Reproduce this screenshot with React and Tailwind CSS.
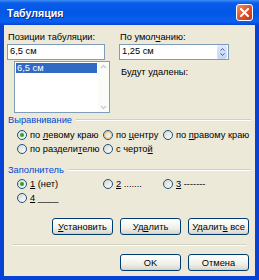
import React from "react";

function U({ children }) {
  return <span className="underline underline-offset-[1px] decoration-[1px]">{children}</span>;
}

function Radio({ checked, hover }) {
  return (
    <span className="w-[10px] h-[10px] rounded-full border border-[#1c5180] bg-[linear-gradient(135deg,#d6d6cf,#ffffff)] flex items-center justify-center shrink-0">
      {hover && <span className="w-[8px] h-[8px] rounded-full border-[1.5px] border-[#f5b24b]" />}
      {checked && <span className="w-[4px] h-[4px] rounded-full bg-[#26a826]" />}
    </span>
  );
}

function RadioItem({ checked, hover, children }) {
  return (
    <div className="flex items-center gap-[3px] h-[14px]">
      <Radio checked={checked} hover={hover} />
      <span className="text-[9.3px] leading-[12px] text-black whitespace-nowrap">{children}</span>
    </div>
  );
}

function Btn({ children, w = "w-[61px]" }) {
  return (
    <div className={`${w} h-[17px] rounded-[3px] border border-[#003c74] bg-[linear-gradient(180deg,#ffffff,#f0f0ea_60%,#d8d5c8)] flex items-center justify-center text-[9.3px] leading-[12px] text-black shadow-[inset_0_-1px_0_#d6d0c5]`}>
      <span className="whitespace-pre">{children}</span>
    </div>
  );
}

function GroupHeader({ children }) {
  return (
    <div className="flex items-center h-[12px] pl-[4px] pr-[4px]">
      <span className="text-[9.3px] leading-[12px] text-[#0046d5] whitespace-nowrap">{children}</span>
      <span className="flex-1 ml-[4px] h-[2px] border-t border-[#d0d0bf] border-b border-b-white" />
    </div>
  );
}

export default function App() {
  return (
    <div className="w-[259px] h-[280px] bg-[#0842d4] flex flex-col font-['Liberation_Sans',Arial,sans-serif] overflow-hidden">
      {/* Title bar */}
      <div className="h-[25px] shrink-0 flex items-center pl-[7px] pr-[6px] bg-[linear-gradient(180deg,#3d8cf6_0%,#0a5de8_12%,#0256e6_50%,#0a60ee_85%,#0646d6_100%)]">
        <span className="text-white font-bold text-[10.6px] leading-[14px] [text-shadow:1px_1px_0_#0a2a8a]">Табуляция</span>
        <div className="ml-auto w-[17px] h-[17px] rounded-[3px] border border-white bg-[linear-gradient(135deg,#f0906c,#e0532f_50%,#c23a16)] flex items-center justify-center">
          <svg width="9" height="9" viewBox="0 0 9 9">
            <path d="M1 1 L8 8 M8 1 L1 8" stroke="white" strokeWidth="2" strokeLinecap="square" />
          </svg>
        </div>
      </div>

      {/* Body */}
      <div className="flex-1 mx-[4px] mb-[4px] bg-[#ece9d8] flex flex-col pt-[6px]">
        {/* top section */}
        <div className="flex pl-[3px]">
          <div className="w-[98px] flex flex-col">
            <div className="text-[9.3px] leading-[12px] pl-[1px] text-black whitespace-nowrap">Позиции табуляции:</div>
            <div className="mt-[1px] h-[16px] bg-white border border-[#7f9db9] flex items-center pl-[2px] text-[9.3px] text-black">6,5 см</div>
            <div className="mt-[1px] ml-[7px] w-[96px] h-[52px] bg-white border border-[#7f9db9] flex">
              <div className="flex-1 p-[1px]">
                <div className="h-[10px] bg-[#316ac5] text-white text-[9.3px] leading-[10px] pl-[1px]">6,5 см</div>
              </div>
              <div className="w-[11px] bg-[#fbfbf8] flex flex-col justify-between items-center py-[2px]">
                <svg width="7" height="5" viewBox="0 0 7 5"><path d="M1 4 L3.5 1.5 L6 4" stroke="#c8cbd8" strokeWidth="1.3" fill="none" /></svg>
                <svg width="7" height="5" viewBox="0 0 7 5"><path d="M1 1 L3.5 3.5 L6 1" stroke="#c8cbd8" strokeWidth="1.3" fill="none" /></svg>
              </div>
            </div>
          </div>
          <div className="w-[110px] ml-[14px] flex flex-col">
            <div className="text-[9.3px] leading-[12px] pl-[1px] text-black whitespace-nowrap">По умол<U>ч</U>анию:</div>
            <div className="mt-[1px] h-[16px] bg-white border border-[#7f9db9] flex items-center pl-[2px] text-[9.3px] text-black">
              <span className="flex-1">1,25 см</span>
              <div className="w-[10px] h-[14px] mr-[1px] bg-[linear-gradient(180deg,#dfe8fb,#c6d5f6)] rounded-[2px] flex flex-col items-center justify-center gap-[2px]">
                <svg width="5" height="3" viewBox="0 0 5 3"><path d="M0.5 2.7 L2.5 0.5 L4.5 2.7" stroke="#4d6185" strokeWidth="1" fill="none" /></svg>
                <svg width="5" height="3" viewBox="0 0 5 3"><path d="M0.5 0.3 L2.5 2.5 L4.5 0.3" stroke="#4d6185" strokeWidth="1" fill="none" /></svg>
              </div>
            </div>
            <div className="mt-[6px] text-[9.3px] leading-[12px] pl-[2px] text-black whitespace-nowrap">Будут удалены:</div>
          </div>
        </div>

        {/* Alignment */}
        <div className="mt-[1px]">
          <GroupHeader>Выравнивание</GroupHeader>
        </div>
        <div className="mt-[2px] grid grid-cols-[86px_60px_1fr] pl-[13px]">
          <RadioItem checked>по <U>л</U>евому краю</RadioItem>
          <RadioItem hover>по <U>ц</U>ентру</RadioItem>
          <RadioItem>по <U>п</U>равому краю</RadioItem>
          <RadioItem>по раздели<U>т</U>елю</RadioItem>
          <RadioItem>с черто<U>й</U></RadioItem>
        </div>

        {/* Leader */}
        <div className="mt-[8px]">
          <GroupHeader>Заполнитель</GroupHeader>
        </div>
        <div className="mt-[1px] grid grid-cols-[86px_60px_1fr] pl-[13px]">
          <RadioItem checked><U>1</U> (нет)</RadioItem>
          <RadioItem><U>2</U> .......</RadioItem>
          <RadioItem><U>3</U> -------</RadioItem>
          <RadioItem><U>4</U> ____</RadioItem>
        </div>

        {/* Buttons */}
        <div className="mt-[13px] flex justify-end gap-[7px] pr-[6px]">
          <Btn><U>У</U>становить</Btn>
          <Btn>Уд<U>а</U>лить</Btn>
          <Btn>Удалит<U>ь</U> все</Btn>
        </div>

        <div className="mt-[9px] mx-[9px] h-[2px] border-t border-[#d0d0bf] border-b border-b-white" />

        <div className="mt-[8px] flex justify-end gap-[7px] pr-[6px]">
          <Btn>OK</Btn>
          <Btn>Отмена</Btn>
        </div>
      </div>
    </div>
  );
}
